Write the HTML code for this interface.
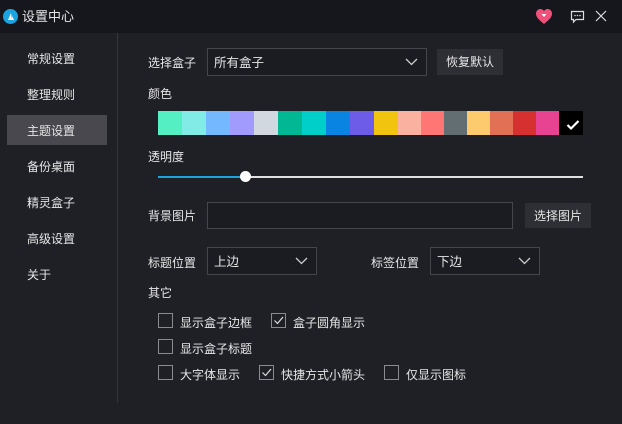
<!DOCTYPE html>
<html><head><meta charset="utf-8"><style>
*{margin:0;padding:0;box-sizing:border-box}
body{width:622px;height:424px;background:#1f2026;font-family:"Liberation Sans","Noto Sans CJK SC",sans-serif;font-size:12px;color:#e6e6e6;position:relative;overflow:hidden}
.a{position:absolute}
.t{position:absolute;line-height:16px;white-space:nowrap}
.sel{position:absolute;border:1px solid #45464c;background:#1b1c21}
.sel span{position:absolute;left:6px;top:50%;transform:translateY(-45%);line-height:16px;font-size:12.5px}
.sel svg{position:absolute;right:8px;top:50%;margin-top:-4px}
.btn{position:absolute;background:#2e2f35;text-align:center;line-height:27px}
.cb{position:absolute;width:15px;height:15px;border:1px solid #8a8b90}
.sw{position:absolute;top:111px;height:24px}
</style></head><body>
<div class="a" style="left:0;top:0;width:622px;height:33px;background:#16171d"></div>
<div class="a" style="left:3px;top:9px;width:15px;height:15px;border-radius:50%;background:#1ba4e0"></div>
<svg class="a" style="left:3px;top:9px" width="15" height="15"><path d="M5 11 L8 4 L9 11 Z M9 7 L11 11 L9 11Z" fill="#fff"/></svg>
<div class="t" style="left:22px;top:9px;font-size:13px">设置中心</div>
<svg class="a" style="left:535px;top:8px" width="18" height="17"><path d="M9 16 C3 11 1 9 1 5.5 C1 3 3 1 5.3 1 C7 1 8.2 2 9 3 C9.8 2 11 1 12.7 1 C15 1 17 3 17 5.5 C17 9 15 11 9 16Z" fill="#f0507a"/><path d="M6.5 6 H11.5 L9 9Z" fill="#fff"/></svg>
<svg class="a" style="left:570px;top:10px" width="15" height="14"><path d="M1.5 1.5 H13.5 V9.5 H6 L3.5 12 V9.5 H1.5Z" fill="none" stroke="#ddd" stroke-width="1.2"/><circle cx="5" cy="5.5" r=".8" fill="#ddd"/><circle cx="7.5" cy="5.5" r=".8" fill="#ddd"/><circle cx="10" cy="5.5" r=".8" fill="#ddd"/></svg>
<svg class="a" style="left:595px;top:10px" width="12" height="12"><path d="M1 1 L11 11 M11 1 L1 11" stroke="#ddd" stroke-width="1.2"/></svg>

<div class="a" style="left:117px;top:33px;width:1px;height:370px;background:#34353b"></div>
<div class="a" style="left:7px;top:115px;width:100px;height:30px;background:#48484e"></div>
<div class="t" style="left:27px;top:51px">常规设置</div>
<div class="t" style="left:27px;top:87px">整理规则</div>
<div class="t" style="left:27px;top:123px">主题设置</div>
<div class="t" style="left:27px;top:159px">备份桌面</div>
<div class="t" style="left:27px;top:195px">精灵盒子</div>
<div class="t" style="left:27px;top:231px">高级设置</div>
<div class="t" style="left:27px;top:267px">关于</div>

<div class="t" style="left:148px;top:55px">选择盒子</div>
<div class="sel" style="left:207px;top:48px;width:220px;height:28px"><span>所有盒子</span><svg width="13" height="8"><path d="M1 1 L6.5 6.5 L12 1" fill="none" stroke="#ccc" stroke-width="1.3"/></svg></div>
<div class="btn" style="left:437px;top:49px;width:66px;height:26px">恢复默认</div>
<div class="t" style="left:148px;top:86px">颜色</div>

<div class="sw" style="left:158px;width:24px;background:#55efc4"></div>
<div class="sw" style="left:182px;width:24px;background:#81ece6"></div>
<div class="sw" style="left:206px;width:24px;background:#74b9ff"></div>
<div class="sw" style="left:230px;width:24px;background:#a29bfe"></div>
<div class="sw" style="left:254px;width:24px;background:#d1d8e0"></div>
<div class="sw" style="left:278px;width:24px;background:#00b894"></div>
<div class="sw" style="left:302px;width:24px;background:#00cec9"></div>
<div class="sw" style="left:326px;width:24px;background:#0984e3"></div>
<div class="sw" style="left:350px;width:24px;background:#6c5ce7"></div>
<div class="sw" style="left:374px;width:24px;background:#f1c40f"></div>
<div class="sw" style="left:398px;width:23px;background:#fab1a0"></div>
<div class="sw" style="left:421px;width:23px;background:#ff7675"></div>
<div class="sw" style="left:444px;width:23px;background:#636e72"></div>
<div class="sw" style="left:467px;width:23px;background:#fdcb6e"></div>
<div class="sw" style="left:490px;width:23px;background:#e17055"></div>
<div class="sw" style="left:513px;width:23px;background:#d63031"></div>
<div class="sw" style="left:536px;width:23px;background:#e84393"></div>
<div class="sw" style="left:559px;width:24px;background:#000"></div>
<svg class="a" style="left:566px;top:119px" width="14" height="12"><path d="M1.5 6 L5 9.5 L12.5 2" fill="none" stroke="#fff" stroke-width="2.2"/></svg>

<div class="t" style="left:148px;top:149px">透明度</div>
<div class="a" style="left:158px;top:176px;width:425px;height:2px;background:#e0e0e0"></div>
<div class="a" style="left:158px;top:176px;width:88px;height:2px;background:#1ba4e0"></div>
<div class="a" style="left:240px;top:171px;width:11px;height:11px;border-radius:50%;background:#fff"></div>

<div class="t" style="left:148px;top:208px">背景图片</div>
<div class="a" style="left:207px;top:202px;width:306px;height:27px;border:1px solid #45464c;background:#1b1c21"></div>
<div class="btn" style="left:525px;top:203px;width:66px;height:25px;line-height:26px">选择图片</div>

<div class="t" style="left:148px;top:255px">标题位置</div>
<div class="sel" style="left:207px;top:247px;width:110px;height:28px"><span>上边</span><svg width="13" height="8"><path d="M1 1 L6.5 6.5 L12 1" fill="none" stroke="#ccc" stroke-width="1.3"/></svg></div>
<div class="t" style="left:371px;top:255px">标签位置</div>
<div class="sel" style="left:430px;top:247px;width:110px;height:28px"><span>下边</span><svg width="13" height="8"><path d="M1 1 L6.5 6.5 L12 1" fill="none" stroke="#ccc" stroke-width="1.3"/></svg></div>

<div class="t" style="left:148px;top:285px">其它</div>

<div class="cb" style="left:158px;top:313px"></div><div class="t" style="left:180px;top:315px">显示盒子边框</div>
<div class="cb" style="left:271px;top:313px"><svg width="13" height="13"><path d="M2.5 6.5 L5.5 9.5 L11 3" fill="none" stroke="#ddd" stroke-width="1.2"/></svg></div><div class="t" style="left:293px;top:315px">盒子圆角显示</div>
<div class="cb" style="left:158px;top:339px"></div><div class="t" style="left:180px;top:341px">显示盒子标题</div>
<div class="cb" style="left:158px;top:365px"></div><div class="t" style="left:180px;top:367px">大字体显示</div>
<div class="cb" style="left:259px;top:365px"><svg width="13" height="13"><path d="M2.5 6.5 L5.5 9.5 L11 3" fill="none" stroke="#ddd" stroke-width="1.2"/></svg></div><div class="t" style="left:281px;top:367px">快捷方式小箭头</div>
<div class="cb" style="left:384px;top:365px"></div><div class="t" style="left:406px;top:367px">仅显示图标</div>
</body></html>
